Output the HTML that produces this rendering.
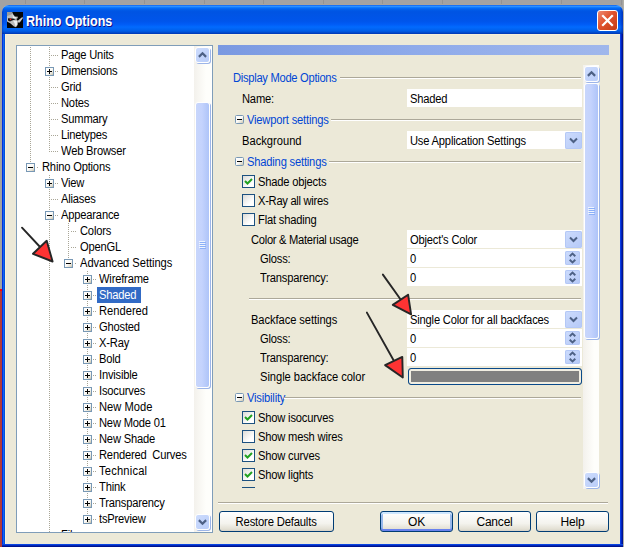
<!DOCTYPE html>
<html><head><meta charset="utf-8"><title>Rhino Options</title>
<style>
html,body{margin:0;padding:0}
body{width:624px;height:547px;overflow:hidden;position:relative;background:#a2a2a2;font:12px "Liberation Sans", sans-serif;letter-spacing:-0.2px;color:#000}
.a{position:absolute}
.t{position:absolute;white-space:pre;line-height:14px;height:14px;transform:scaleX(.93);transform-origin:0 0}
.blue{color:#0046d5}
#win{position:absolute;left:2px;top:5px;width:621px;height:560px;background:#ece9d8;border-radius:7px 7px 0 0;overflow:hidden}
#title{position:absolute;left:0;top:0;width:621px;height:29px;background:linear-gradient(to bottom,#0058ee 0%,#3593ff 4%,#288eff 6%,#127dff 8%,#036ffc 10%,#0262ee 14%,#0057e5 20%,#0054e3 24%,#0055eb 56%,#005bf5 66%,#026afe 76%,#0062ef 86%,#0056dc 92%,#0046c8 96%,#0034b0 100%)}
#title .cap{position:absolute;left:24px;top:8px;font:bold 14px "Liberation Sans", sans-serif;letter-spacing:0;transform:scaleX(.895);transform-origin:0 0;color:#fff;text-shadow:1px 1px #0f1089;line-height:16px;white-space:pre}
.bl,.br{position:absolute;top:29px;width:3px;height:540px}.bl{background:linear-gradient(to right,#0030e0 0,#0030e0 33%,#1166ee 33%,#1166ee 66%,#0050dd 66%)}.br{background:linear-gradient(to right,#0a3ce4 0,#0a3ce4 33%,#0024bc 33%,#0024bc 66%,#001290 66%)}
.tree{position:absolute;left:16px;top:45px;width:195px;height:486px;border:1px solid #7f9db9;background:#fff;overflow:hidden}
.sb{position:absolute;width:17px;background:linear-gradient(to right,#f3f1ec,#fefefb 70%,#fefefb)}
.sbtn{position:absolute;left:1px;width:15px;height:16px;border:1px solid #fff;border-radius:3px;background:linear-gradient(135deg,#cddcfd,#b9cdf9);box-shadow:1px 1px 0 #9db5e8;box-sizing:border-box}
.thumb{position:absolute;left:1px;width:15px;border:1px solid #fff;border-radius:3px;background:linear-gradient(to right,#c8d6fb,#c4d3fd 45%,#aec4f8);box-shadow:1px 1px 0 #9db5e8;box-sizing:border-box}
.inp{position:absolute;background:#fff;height:18px;left:407px;width:175px}
.inp span{position:absolute;left:3px;top:3px;line-height:14px;white-space:pre;transform:scaleX(.93);transform-origin:0 0}
.cbtn{position:absolute;right:0;top:1px;width:17px;height:17px;border-radius:2px;background:linear-gradient(135deg,#cddcfd,#b5c9f7);box-shadow:inset 0 0 0 1px #b4c8f6;box-sizing:border-box}
.chk{position:absolute;width:11px;height:11px;border:1px solid #1c5180;background:linear-gradient(135deg,#dcdcd7,#fff 70%)}
.btn{position:absolute;height:18px;padding-top:1px;border:1px solid #003c74;border-radius:3px;background:linear-gradient(to bottom,#fff,#f4f3ee 60%,#e3e0d4 90%,#d6d0c5);text-align:center;line-height:18px;box-sizing:content-box}
.hr{position:absolute;height:1px;background:#aca899;border-bottom:1px solid #fff}
.ln{position:absolute;height:1px;background:#b6b4a8}
</style></head><body>

<div class="a" style="left:0;top:289px;width:3px;height:3px;background:#ff0000"></div>
<div class="a" style="left:0;top:291px;width:3px;height:256px;background:#b23a38"></div>
<div class="a" style="left:623px;top:0;width:1px;height:547px;background:#b2b0a6"></div>
<div class="a" style="left:25px;top:0;width:1px;height:5px;background:#939393"></div>
<div class="a" style="left:84px;top:0;width:1px;height:5px;background:#939393"></div>
<div class="a" style="left:144px;top:0;width:1px;height:5px;background:#939393"></div>
<div class="a" style="left:204px;top:0;width:1px;height:5px;background:#939393"></div>
<div class="a" style="left:263px;top:0;width:1px;height:5px;background:#939393"></div>
<div class="a" style="left:323px;top:0;width:1px;height:5px;background:#939393"></div>
<div class="a" style="left:382px;top:0;width:1px;height:5px;background:#939393"></div>
<div class="a" style="left:442px;top:0;width:1px;height:5px;background:#939393"></div>
<div class="a" style="left:501px;top:0;width:1px;height:5px;background:#939393"></div>
<div class="a" style="left:561px;top:0;width:1px;height:5px;background:#939393"></div>
<div class="a" style="left:621px;top:0;width:1px;height:5px;background:#939393"></div>
<div class="a" style="left:8px;top:4px;width:608px;height:1px;background:#a8a49c"></div>
<div id="win">
<div id="title"><svg class="a" style="left:5px;top:7px" width="16" height="16" viewBox="0 0 16 16"><rect width="16" height="16" fill="#050505"/><path d="M0 0H5L6.3 2.6L8 4.6L11 4.8L10.4 6.4L9.3 7L11 9L10.6 13L9 15.2L7 14.6L3.2 11.2L0 9.6Z" fill="#bdbdbd"/><path d="M0 0H5L5.6 1.6L3 3L0 4Z" fill="#9a9a9a"/><path d="M5.5 2L7 5L9.5 5.4L8.6 6.6L6 6Z" fill="#f2f2f2"/><path d="M6 8.5L10 9L10.2 12.6L8.6 14.6L7.6 11.2Z" fill="#efefef"/><path d="M1 6.2L5.5 6.4L8.8 7.2L5 8.4L3 9.4L1 8.6Z" fill="#111"/><path d="M11 8.4L15.6 4.8L15.6 6.6L12.8 10.4L11 10.6Z" fill="#c9c9c9"/><rect x="2.7" y="6.6" width="1.5" height="1.5" fill="#ff1010"/></svg><div class="cap">Rhino Options</div>
<div class="a" style="left:595px;top:5px;width:19px;height:19px;border:1px solid #fff;border-radius:3px;background:linear-gradient(135deg,#ee8a72,#e0522d 45%,#c33b13)"><svg width="19" height="19" viewBox="0 0 19 19" class="a" style="left:0;top:0"><path d="M5 5L14 14M14 5L5 14" stroke="#fff" stroke-width="2.2" stroke-linecap="square"/></svg></div>
<div class="a" style="right:0;top:0;width:3px;height:29px;background:linear-gradient(to right,rgba(0,20,150,0),rgba(0,20,150,.55))"></div><div class="a" style="left:0;top:0;width:2px;height:29px;background:linear-gradient(to left,rgba(0,20,150,0),rgba(0,20,150,.35))"></div>
</div>
<div class="a" style="left:3px;top:29px;width:615px;height:1px;background:#f6efd8"></div><div class="a" style="left:3px;top:29px;width:1px;height:520px;background:#f9f1d8"></div>
<div class="bl" style="left:0"></div><div class="br" style="left:618px"></div>
<div class="a" style="left:0;top:539px;width:621px;height:4px;background:linear-gradient(to bottom,#0a44e0 0,#0a44e0 25%,#0026b8 25%,#0026b8 50%,#00138c 50%)"></div>
</div>
<div class="tree">
<svg class="a" style="left:0;top:0" width="195" height="486" shape-rendering="crispEdges"><g stroke="#a9a697" stroke-width="1" stroke-dasharray="1 1"><line x1="13.5" y1="1" x2="13.5" y2="122"/><line x1="32.5" y1="1" x2="32.5" y2="106"/><line x1="32.5" y1="129" x2="32.5" y2="495"/><line x1="51.5" y1="177" x2="51.5" y2="218"/><line x1="70.5" y1="225" x2="70.5" y2="474"/><line x1="34" y1="9.5" x2="41" y2="9.5"/><line x1="38" y1="25.5" x2="41" y2="25.5"/><line x1="34" y1="41.5" x2="41" y2="41.5"/><line x1="34" y1="57.5" x2="41" y2="57.5"/><line x1="34" y1="73.5" x2="41" y2="73.5"/><line x1="34" y1="89.5" x2="41" y2="89.5"/><line x1="34" y1="105.5" x2="41" y2="105.5"/><line x1="20" y1="121.5" x2="22" y2="121.5"/><line x1="38" y1="137.5" x2="41" y2="137.5"/><line x1="34" y1="153.5" x2="41" y2="153.5"/><line x1="38" y1="169.5" x2="41" y2="169.5"/><line x1="54" y1="185.5" x2="60" y2="185.5"/><line x1="54" y1="201.5" x2="60" y2="201.5"/><line x1="58" y1="217.5" x2="60" y2="217.5"/><line x1="76" y1="233.5" x2="79" y2="233.5"/><line x1="76" y1="249.5" x2="79" y2="249.5"/><line x1="76" y1="265.5" x2="79" y2="265.5"/><line x1="76" y1="281.5" x2="79" y2="281.5"/><line x1="76" y1="297.5" x2="79" y2="297.5"/><line x1="76" y1="313.5" x2="79" y2="313.5"/><line x1="76" y1="329.5" x2="79" y2="329.5"/><line x1="76" y1="345.5" x2="79" y2="345.5"/><line x1="76" y1="361.5" x2="79" y2="361.5"/><line x1="76" y1="377.5" x2="79" y2="377.5"/><line x1="76" y1="393.5" x2="79" y2="393.5"/><line x1="76" y1="409.5" x2="79" y2="409.5"/><line x1="76" y1="425.5" x2="79" y2="425.5"/><line x1="76" y1="441.5" x2="79" y2="441.5"/><line x1="76" y1="457.5" x2="79" y2="457.5"/><line x1="76" y1="473.5" x2="79" y2="473.5"/><line x1="34" y1="489.5" x2="41" y2="489.5"/></g>
<g transform="translate(28 21)"><rect x="0" y="0" width="9" height="9" fill="#fff"/><rect x="0.5" y="0.5" width="8" height="8" rx="1" fill="url(#bg)" stroke="#7898b5"/><path d="M2 4.5h5M4.5 2v5" stroke="#000"/></g>
<g transform="translate(9 117)"><rect x="0" y="0" width="9" height="9" fill="#fff"/><rect x="0.5" y="0.5" width="8" height="8" rx="1" fill="url(#bg)" stroke="#7898b5"/><path d="M2 4.5h5" stroke="#000"/></g>
<g transform="translate(28 133)"><rect x="0" y="0" width="9" height="9" fill="#fff"/><rect x="0.5" y="0.5" width="8" height="8" rx="1" fill="url(#bg)" stroke="#7898b5"/><path d="M2 4.5h5M4.5 2v5" stroke="#000"/></g>
<g transform="translate(28 165)"><rect x="0" y="0" width="9" height="9" fill="#fff"/><rect x="0.5" y="0.5" width="8" height="8" rx="1" fill="url(#bg)" stroke="#7898b5"/><path d="M2 4.5h5" stroke="#000"/></g>
<g transform="translate(47 213)"><rect x="0" y="0" width="9" height="9" fill="#fff"/><rect x="0.5" y="0.5" width="8" height="8" rx="1" fill="url(#bg)" stroke="#7898b5"/><path d="M2 4.5h5" stroke="#000"/></g>
<g transform="translate(66 229)"><rect x="0" y="0" width="9" height="9" fill="#fff"/><rect x="0.5" y="0.5" width="8" height="8" rx="1" fill="url(#bg)" stroke="#7898b5"/><path d="M2 4.5h5M4.5 2v5" stroke="#000"/></g>
<g transform="translate(66 245)"><rect x="0" y="0" width="9" height="9" fill="#fff"/><rect x="0.5" y="0.5" width="8" height="8" rx="1" fill="url(#bg)" stroke="#7898b5"/><path d="M2 4.5h5M4.5 2v5" stroke="#000"/></g>
<g transform="translate(66 261)"><rect x="0" y="0" width="9" height="9" fill="#fff"/><rect x="0.5" y="0.5" width="8" height="8" rx="1" fill="url(#bg)" stroke="#7898b5"/><path d="M2 4.5h5M4.5 2v5" stroke="#000"/></g>
<g transform="translate(66 277)"><rect x="0" y="0" width="9" height="9" fill="#fff"/><rect x="0.5" y="0.5" width="8" height="8" rx="1" fill="url(#bg)" stroke="#7898b5"/><path d="M2 4.5h5M4.5 2v5" stroke="#000"/></g>
<g transform="translate(66 293)"><rect x="0" y="0" width="9" height="9" fill="#fff"/><rect x="0.5" y="0.5" width="8" height="8" rx="1" fill="url(#bg)" stroke="#7898b5"/><path d="M2 4.5h5M4.5 2v5" stroke="#000"/></g>
<g transform="translate(66 309)"><rect x="0" y="0" width="9" height="9" fill="#fff"/><rect x="0.5" y="0.5" width="8" height="8" rx="1" fill="url(#bg)" stroke="#7898b5"/><path d="M2 4.5h5M4.5 2v5" stroke="#000"/></g>
<g transform="translate(66 325)"><rect x="0" y="0" width="9" height="9" fill="#fff"/><rect x="0.5" y="0.5" width="8" height="8" rx="1" fill="url(#bg)" stroke="#7898b5"/><path d="M2 4.5h5M4.5 2v5" stroke="#000"/></g>
<g transform="translate(66 341)"><rect x="0" y="0" width="9" height="9" fill="#fff"/><rect x="0.5" y="0.5" width="8" height="8" rx="1" fill="url(#bg)" stroke="#7898b5"/><path d="M2 4.5h5M4.5 2v5" stroke="#000"/></g>
<g transform="translate(66 357)"><rect x="0" y="0" width="9" height="9" fill="#fff"/><rect x="0.5" y="0.5" width="8" height="8" rx="1" fill="url(#bg)" stroke="#7898b5"/><path d="M2 4.5h5M4.5 2v5" stroke="#000"/></g>
<g transform="translate(66 373)"><rect x="0" y="0" width="9" height="9" fill="#fff"/><rect x="0.5" y="0.5" width="8" height="8" rx="1" fill="url(#bg)" stroke="#7898b5"/><path d="M2 4.5h5M4.5 2v5" stroke="#000"/></g>
<g transform="translate(66 389)"><rect x="0" y="0" width="9" height="9" fill="#fff"/><rect x="0.5" y="0.5" width="8" height="8" rx="1" fill="url(#bg)" stroke="#7898b5"/><path d="M2 4.5h5M4.5 2v5" stroke="#000"/></g>
<g transform="translate(66 405)"><rect x="0" y="0" width="9" height="9" fill="#fff"/><rect x="0.5" y="0.5" width="8" height="8" rx="1" fill="url(#bg)" stroke="#7898b5"/><path d="M2 4.5h5M4.5 2v5" stroke="#000"/></g>
<g transform="translate(66 421)"><rect x="0" y="0" width="9" height="9" fill="#fff"/><rect x="0.5" y="0.5" width="8" height="8" rx="1" fill="url(#bg)" stroke="#7898b5"/><path d="M2 4.5h5M4.5 2v5" stroke="#000"/></g>
<g transform="translate(66 437)"><rect x="0" y="0" width="9" height="9" fill="#fff"/><rect x="0.5" y="0.5" width="8" height="8" rx="1" fill="url(#bg)" stroke="#7898b5"/><path d="M2 4.5h5M4.5 2v5" stroke="#000"/></g>
<g transform="translate(66 453)"><rect x="0" y="0" width="9" height="9" fill="#fff"/><rect x="0.5" y="0.5" width="8" height="8" rx="1" fill="url(#bg)" stroke="#7898b5"/><path d="M2 4.5h5M4.5 2v5" stroke="#000"/></g>
<g transform="translate(66 469)"><rect x="0" y="0" width="9" height="9" fill="#fff"/><rect x="0.5" y="0.5" width="8" height="8" rx="1" fill="url(#bg)" stroke="#7898b5"/><path d="M2 4.5h5M4.5 2v5" stroke="#000"/></g>
<defs><linearGradient id="bg" x1="0" y1="0" x2="1" y2="1"><stop offset="0" stop-color="#fff"/><stop offset="0.5" stop-color="#fbfaf7"/><stop offset="0.78" stop-color="#e1ddcf"/><stop offset="1" stop-color="#b4ac97"/></linearGradient></defs></svg>
<div class="t" style="left:44px;top:2px">Page Units</div>
<div class="t" style="left:44px;top:18px">Dimensions</div>
<div class="t" style="left:44px;top:34px">Grid</div>
<div class="t" style="left:44px;top:50px">Notes</div>
<div class="t" style="left:44px;top:66px">Summary</div>
<div class="t" style="left:44px;top:82px">Linetypes</div>
<div class="t" style="left:44px;top:98px">Web Browser</div>
<div class="t" style="left:25px;top:114px">Rhino Options</div>
<div class="t" style="left:44px;top:130px">View</div>
<div class="t" style="left:44px;top:146px">Aliases</div>
<div class="t" style="left:44px;top:162px">Appearance</div>
<div class="t" style="left:63px;top:178px">Colors</div>
<div class="t" style="left:63px;top:194px">OpenGL</div>
<div class="t" style="left:63px;top:210px;letter-spacing:-0.05px">Advanced Settings</div>
<div class="t" style="left:82px;top:226px">Wireframe</div>
<div class="a" style="left:80px;top:241px;width:44px;height:15.5px;background:#316ac5"></div>
<div class="t" style="left:82px;top:242px;color:#fff">Shaded</div>
<div class="t" style="left:82px;top:258px;letter-spacing:0px">Rendered</div>
<div class="t" style="left:82px;top:274px">Ghosted</div>
<div class="t" style="left:82px;top:290px">X-Ray</div>
<div class="t" style="left:82px;top:306px">Bold</div>
<div class="t" style="left:82px;top:322px">Invisible</div>
<div class="t" style="left:82px;top:338px">Isocurves</div>
<div class="t" style="left:82px;top:354px;letter-spacing:0px">New Mode</div>
<div class="t" style="left:82px;top:370px">New Mode 01</div>
<div class="t" style="left:82px;top:386px">New Shade</div>
<div class="t" style="left:82px;top:402px">Rendered  Curves</div>
<div class="t" style="left:82px;top:418px;letter-spacing:0.2px">Technical</div>
<div class="t" style="left:82px;top:434px">Think</div>
<div class="t" style="left:82px;top:450px">Transparency</div>
<div class="t" style="left:82px;top:466px">tsPreview</div>
<div class="t" style="left:44px;top:482px">Files</div>
<div class="sb" style="left:177px;top:0px;width:17px;height:486px">
<div class="sbtn" style="top:1px"><svg class="a" style="left:-1px;top:-1px" width="15" height="16"><g transform="translate(7.5 8)"><path d="M-3.6 1.9L0 -1.7L3.6 1.9" fill="none" stroke="#4d6185" stroke-width="2.2"/></g></svg></div>
<div class="thumb" style="top:56px;height:286px"><svg class="a" style="left:3px;top:138px" width="8" height="8" shape-rendering="crispEdges"><path d="M0 0.5h6M0 2.5h6M0 4.5h6M0 6.5h6" stroke="#eef4fe"/><path d="M1 1.5h6M1 3.5h6M1 5.5h6M1 7.5h6" stroke="#8cb0f8"/></svg></div>
<div class="sbtn" style="top:468px"><svg class="a" style="left:-1px;top:-1px" width="15" height="16"><g transform="translate(7.5 8)"><path d="M-3.6 -1.9L0 1.7L3.6 -1.9" fill="none" stroke="#4d6185" stroke-width="2.2"/></g></svg></div>
</div>
</div>
<div class="a" style="left:218px;top:45px;width:391px;height:10px;background:linear-gradient(to right,#7a99e1,#8eaaea 50%,#a0b7ec)"></div>
<div class="t blue" style="left:233px;top:71px;letter-spacing:-0.3px">Display Mode Options</div>
<div class="hr" style="left:340px;top:77px;width:241px"></div>
<div class="t " style="left:242px;top:92px">Name:</div>
<div class="inp" style="top:89px"><span>Shaded</span></div>
<svg class="a" style="left:235px;top:115px" width="9" height="9"><rect x="0.5" y="0.5" width="8" height="8" rx="1" fill="url(#bg2)" stroke="#7898b5"/><path d="M2 4.5h5" stroke="#000"/><defs><linearGradient id="bg2" x1="0" y1="0" x2="1" y2="1"><stop offset="0" stop-color="#fff"/><stop offset="0.5" stop-color="#fbfaf7"/><stop offset="0.78" stop-color="#e1ddcf"/><stop offset="1" stop-color="#b4ac97"/></linearGradient></defs></svg>
<div class="t blue" style="left:247px;top:113px">Viewport settings</div>
<div class="hr" style="left:331px;top:119px;width:250px"></div>
<div class="t " style="left:242px;top:134px;letter-spacing:0px">Background</div>
<div class="inp" style="top:131px"><span>Use Application Settings</span><div class="cbtn"><svg class="a" style="left:0;top:0" width="17" height="17"><path d="M5 6.5L8.5 10L12 6.5" fill="none" stroke="#4d6185" stroke-width="2"/></svg></div></div>
<svg class="a" style="left:235px;top:157px" width="9" height="9"><rect x="0.5" y="0.5" width="8" height="8" rx="1" fill="url(#bg2)" stroke="#7898b5"/><path d="M2 4.5h5" stroke="#000"/><defs><linearGradient id="bg2" x1="0" y1="0" x2="1" y2="1"><stop offset="0" stop-color="#fff"/><stop offset="0.5" stop-color="#fbfaf7"/><stop offset="0.78" stop-color="#e1ddcf"/><stop offset="1" stop-color="#b4ac97"/></linearGradient></defs></svg>
<div class="t blue" style="left:247px;top:155px">Shading settings</div>
<div class="hr" style="left:329px;top:161px;width:252px"></div>
<div class="chk" style="left:242px;top:175px"><svg class="a" style="left:0;top:0" width="11" height="11"><path d="M2 5L4.5 7.5L9 3" fill="none" stroke="#21a121" stroke-width="2"/></svg></div>
<div class="t " style="left:258px;top:175px">Shade objects</div>
<div class="chk" style="left:242px;top:194px"></div>
<div class="t " style="left:258px;top:194px;letter-spacing:-0.3px">X-Ray all wires</div>
<div class="chk" style="left:242px;top:213px"></div>
<div class="t " style="left:258px;top:213px">Flat shading</div>
<div class="t " style="left:251px;top:233px;letter-spacing:-0.3px">Color &amp; Material usage</div>
<div class="inp" style="top:230px"><span>Object's Color</span><div class="cbtn"><svg class="a" style="left:0;top:0" width="17" height="17"><path d="M5 6.5L8.5 10L12 6.5" fill="none" stroke="#4d6185" stroke-width="2"/></svg></div></div>
<div class="t " style="left:260px;top:252px">Gloss:</div>
<div class="inp" style="top:249px"><span>0</span><div class="cbtn" style="right:2px;top:2px;width:15px;height:14px"><svg class="a" style="left:0;top:0" width="15" height="14"><path d="M4.7 5.2L7.5 2.5L10.3 5.2M4.7 8.8L7.5 11.5L10.3 8.8" fill="none" stroke="#4d6185" stroke-width="1.9"/></svg></div></div>
<div class="t " style="left:260px;top:271px">Transparency:</div>
<div class="inp" style="top:268px"><span>0</span><div class="cbtn" style="right:2px;top:2px;width:15px;height:14px"><svg class="a" style="left:0;top:0" width="15" height="14"><path d="M4.7 5.2L7.5 2.5L10.3 5.2M4.7 8.8L7.5 11.5L10.3 8.8" fill="none" stroke="#4d6185" stroke-width="1.9"/></svg></div></div>
<div class="hr" style="left:249px;top:298px;width:332px"></div>
<div class="t " style="left:251px;top:313px;letter-spacing:-0.08px">Backface settings</div>
<div class="inp" style="top:310px"><span>Single Color for all backfaces</span><div class="cbtn"><svg class="a" style="left:0;top:0" width="17" height="17"><path d="M5 6.5L8.5 10L12 6.5" fill="none" stroke="#4d6185" stroke-width="2"/></svg></div></div>
<div class="t " style="left:260px;top:332px">Gloss:</div>
<div class="inp" style="top:329px"><span>0</span><div class="cbtn" style="right:2px;top:2px;width:15px;height:14px"><svg class="a" style="left:0;top:0" width="15" height="14"><path d="M4.7 5.2L7.5 2.5L10.3 5.2M4.7 8.8L7.5 11.5L10.3 8.8" fill="none" stroke="#4d6185" stroke-width="1.9"/></svg></div></div>
<div class="t " style="left:260px;top:351px">Transparency:</div>
<div class="inp" style="top:348px"><span>0</span><div class="cbtn" style="right:2px;top:2px;width:15px;height:14px"><svg class="a" style="left:0;top:0" width="15" height="14"><path d="M4.7 5.2L7.5 2.5L10.3 5.2M4.7 8.8L7.5 11.5L10.3 8.8" fill="none" stroke="#4d6185" stroke-width="1.9"/></svg></div></div>
<div class="t " style="left:260px;top:370px;letter-spacing:-0.05px">Single backface color</div>
<div class="a" style="left:408px;top:368px;width:172px;height:15px;border:1px solid #0a4a8a;border-radius:3px;background:#808080;box-shadow:inset 0 0 0 2px #f1eee2"></div>
<svg class="a" style="left:235px;top:393px" width="9" height="9"><rect x="0.5" y="0.5" width="8" height="8" rx="1" fill="url(#bg2)" stroke="#7898b5"/><path d="M2 4.5h5" stroke="#000"/><defs><linearGradient id="bg2" x1="0" y1="0" x2="1" y2="1"><stop offset="0" stop-color="#fff"/><stop offset="0.5" stop-color="#fbfaf7"/><stop offset="0.78" stop-color="#e1ddcf"/><stop offset="1" stop-color="#b4ac97"/></linearGradient></defs></svg>
<div class="t blue" style="left:247px;top:391px">Visibility</div>
<div class="hr" style="left:284px;top:397px;width:297px"></div>
<div class="chk" style="left:242px;top:411px"><svg class="a" style="left:0;top:0" width="11" height="11"><path d="M2 5L4.5 7.5L9 3" fill="none" stroke="#21a121" stroke-width="2"/></svg></div>
<div class="t " style="left:258px;top:411px">Show isocurves</div>
<div class="chk" style="left:242px;top:430px"></div>
<div class="t " style="left:258px;top:430px">Show mesh wires</div>
<div class="chk" style="left:242px;top:449px"><svg class="a" style="left:0;top:0" width="11" height="11"><path d="M2 5L4.5 7.5L9 3" fill="none" stroke="#21a121" stroke-width="2"/></svg></div>
<div class="t " style="left:258px;top:449px">Show curves</div>
<div class="chk" style="left:242px;top:468px"><svg class="a" style="left:0;top:0" width="11" height="11"><path d="M2 5L4.5 7.5L9 3" fill="none" stroke="#21a121" stroke-width="2"/></svg></div>
<div class="t " style="left:258px;top:468px">Show lights</div>
<div class="a" style="left:242px;top:487px;width:13px;height:1px;background:#1c5180"></div>
<div class="sb" style="left:583px;top:65px;width:16px;height:424px">
<div class="sbtn" style="top:1px"><svg class="a" style="left:-1px;top:-1px" width="15" height="16"><g transform="translate(7.5 8)"><path d="M-3.6 1.9L0 -1.7L3.6 1.9" fill="none" stroke="#4d6185" stroke-width="2.2"/></g></svg></div>
<div class="thumb" style="top:18px;height:256px"><svg class="a" style="left:3px;top:123px" width="8" height="8" shape-rendering="crispEdges"><path d="M0 0.5h6M0 2.5h6M0 4.5h6M0 6.5h6" stroke="#eef4fe"/><path d="M1 1.5h6M1 3.5h6M1 5.5h6M1 7.5h6" stroke="#8cb0f8"/></svg></div>
<div class="sbtn" style="top:407px"><svg class="a" style="left:-1px;top:-1px" width="15" height="16"><g transform="translate(7.5 8)"><path d="M-3.6 -1.9L0 1.7L3.6 -1.9" fill="none" stroke="#4d6185" stroke-width="2.2"/></g></svg></div>
</div>
<div class="hr" style="left:218px;top:502px;width:390px"></div>
<div class="btn" style="left:219px;top:511px;width:113px"><span style="display:inline-block;transform:scaleX(.94)">Restore Defaults</span></div>
<div class="btn" style="left:380px;top:511px;width:71px;box-shadow:inset 0 2px 0 #cee7ff,inset 0 -2px 0 #6982ee,inset 2px 0 0 #98b8ea,inset -2px 0 0 #98b8ea">OK</div>
<div class="btn" style="left:458px;top:511px;width:71px">Cancel</div>
<div class="btn" style="left:536px;top:511px;width:71px">Help</div>
<svg class="a" style="left:0;top:0" width="624" height="547"><g stroke="#262626" stroke-width="1.9" stroke-linejoin="round" stroke-linecap="round">
<path d="M22 227.7L41 248" fill="none"/><path d="M46.7 240.8L33 253.8L52.6 261.5Z" fill="#ff3333"/>
<path d="M382.9 274.6L401 300" fill="none"/><path d="M408.1 294.7L392.8 304.9L411.1 314.3Z" fill="#ff3333"/>
<path d="M366.9 312.6L394 361" fill="none"/><path d="M402.3 356.9L385.1 365.1L402.8 377.5Z" fill="#ff3333"/>
</g></svg>
</body></html>
